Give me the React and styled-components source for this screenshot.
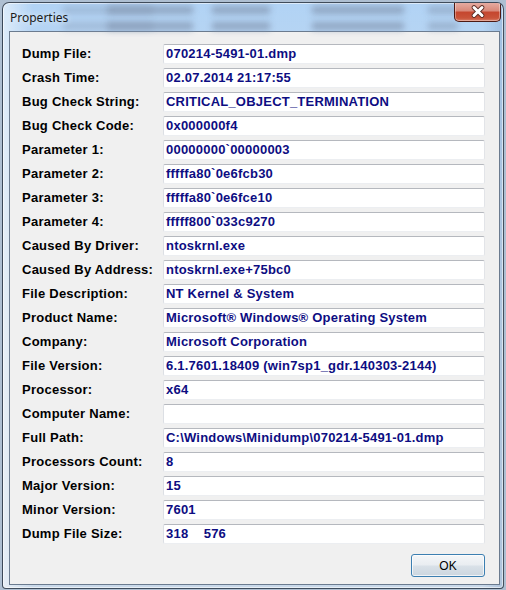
import React from "react";
import styled, { createGlobalStyle } from "styled-components";

const Global = createGlobalStyle`
  html, body { margin: 0; padding: 0; }
  body {
    width: 506px;
    height: 590px;
    overflow: hidden;
    background: #aebfd2;
    font-family: "Liberation Sans", Arial, sans-serif;
  }
`;

const Frame = styled.div`
  position: relative;
  box-sizing: border-box;
  margin: 2px 2px 0 2px;
  width: 502px;
  height: 587px;
  border: 1px solid rgba(40, 50, 65, 0.85);
  border-radius: 7px 7px 4px 4px;
  background:
    linear-gradient(to right, rgba(255,255,255,0.55), rgba(255,255,255,0) 6%, rgba(255,255,255,0) 96%, rgba(120,150,190,0.35)),
    linear-gradient(to bottom, #b1d3f5 0%, #b8d5f2 8%, #cbdcec 60%, #c9d9ea 100%);
  box-shadow: inset 0 0 0 1px rgba(255,255,255,0.55);
  display: flex;
  flex-direction: column;
  overflow: hidden;
`;

const Blur = styled.div`
  position: absolute;
  height: 8px;
  background: #8598b3;
  filter: blur(3px);
`;

const TitleBar = styled.div`
  position: relative;
  height: 28px;
  flex: none;
  display: flex;
  justify-content: space-between;
  align-items: flex-start;
`;

const Title = styled.div`
  position: relative;
  margin: 8px 0 0 7px;
  font-family: "Noto Sans", "Open Sans", sans-serif;
  font-size: 12px;
  line-height: 14px;
  color: #1b1b1b;
  text-shadow: 0 0 6px rgba(255,255,255,0.9);
`;

const CloseButton = styled.div`
  position: relative;
  box-sizing: border-box;
  width: 47px;
  height: 20px;
  margin: -1px 2px 0 0;
  border: 1px solid #4d1a14;
  border-top: none;
  border-radius: 0 0 5px 5px;
  background: linear-gradient(to bottom, #e8b0a6 0%, #d98a7b 45%, #c5472f 55%, #c9543a 85%, #d9806a 100%);
  box-shadow: inset 0 0 0 1px rgba(255,255,255,0.35);
  display: flex;
  align-items: center;
  justify-content: center;
`;

const Client = styled.div`
  box-sizing: border-box;
  flex: 1;
  margin: 0 3px 3px 6px;
  border: 1px solid #6b7b8f;
  background: #f0f0f0;
  padding: 12px 12px 0 12px;
  display: flex;
  flex-direction: column;
`;

const Grid = styled.div`
  display: grid;
  grid-template-columns: 141px 322px;
  grid-auto-rows: 20px;
  row-gap: 4px;
`;

const Label = styled.div`
  font-weight: bold;
  font-size: 13px;
  letter-spacing: 0.25px;
  line-height: 20px;
  color: #000;
  white-space: nowrap;
`;

const Field = styled.div`
  box-sizing: border-box;
  height: 20px;
  background: #fff;
  border: 1px solid;
  border-color: #b5b8be #e2e4e8 #eceef1 #dcdfe4;
  border-radius: 2px;
  padding: 0 2px;
  font-weight: bold;
  font-size: 13px;
  letter-spacing: 0.22px;
  line-height: 18px;
  color: #0d0d82;
  white-space: pre;
  overflow: hidden;
`;

const Footer = styled.div`
  display: flex;
  justify-content: flex-end;
  padding: 10px 0 0 0;
  width: 463px;
`;

const Button = styled.button`
  box-sizing: border-box;
  width: 74px;
  height: 23px;
  border: 1px solid #3c7fb1;
  border-radius: 3px;
  background: linear-gradient(to bottom, #f4f6f8 0%, #e9edf1 48%, #d9e1e8 52%, #ccd6df 100%);
  box-shadow: inset 0 0 0 1px rgba(255,255,255,0.7);
  font-family: "Liberation Sans", Arial, sans-serif;
  font-size: 12px;
  color: #000;
  padding: 0;
  padding-top: 1px;
`;

const rows = [
  ["Dump File:", "070214-5491-01.dmp"],
  ["Crash Time:", "02.07.2014 21:17:55"],
  ["Bug Check String:", "CRITICAL_OBJECT_TERMINATION"],
  ["Bug Check Code:", "0x000000f4"],
  ["Parameter 1:", "00000000`00000003"],
  ["Parameter 2:", "fffffa80`0e6fcb30"],
  ["Parameter 3:", "fffffa80`0e6fce10"],
  ["Parameter 4:", "fffff800`033c9270"],
  ["Caused By Driver:", "ntoskrnl.exe"],
  ["Caused By Address:", "ntoskrnl.exe+75bc0"],
  ["File Description:", "NT Kernel & System"],
  ["Product Name:", "Microsoft® Windows® Operating System"],
  ["Company:", "Microsoft Corporation"],
  ["File Version:", "6.1.7601.18409 (win7sp1_gdr.140303-2144)"],
  ["Processor:", "x64"],
  ["Computer Name:", ""],
  ["Full Path:", "C:\\Windows\\Minidump\\070214-5491-01.dmp"],
  ["Processors Count:", "8"],
  ["Major Version:", "15"],
  ["Minor Version:", "7601"],
  ["Dump File Size:", "318    576"],
];

const blurs = [
  [60, 3, 90, 0.4], [104, 3, 86, 0.75], [209, 3, 58, 0.75], [309, 3, 92, 0.75], [425, 3, 30, 0.55],
  [60, 19, 90, 0.4], [104, 19, 86, 0.75], [209, 19, 58, 0.75], [309, 19, 92, 0.75], [425, 19, 30, 0.55],
];

export default function App() {
  return (
    <>
      <Global />
      <Frame>
        <TitleBar>
          {blurs.map(([l, t, w, o], i) => (
            <Blur key={i} style={{ left: l, top: t, width: w, opacity: o }} />
          ))}
          <Title>Properties</Title>
          <CloseButton>
            <svg width="16" height="13" viewBox="0 0 16 13">
              <path d="M4 2.5 L12 10.5 M12 2.5 L4 10.5" stroke="#5a2a22" strokeWidth="4.6" strokeLinecap="round" />
              <path d="M4 2.5 L12 10.5 M12 2.5 L4 10.5" stroke="#ffffff" strokeWidth="3" strokeLinecap="round" />
            </svg>
          </CloseButton>
        </TitleBar>
        <Client>
          <Grid>
            {rows.map(([k, v]) => (
              <React.Fragment key={k}>
                <Label>{k}</Label>
                <Field>{v}</Field>
              </React.Fragment>
            ))}
          </Grid>
          <Footer>
            <Button>OK</Button>
          </Footer>
        </Client>
      </Frame>
    </>
  );
}
